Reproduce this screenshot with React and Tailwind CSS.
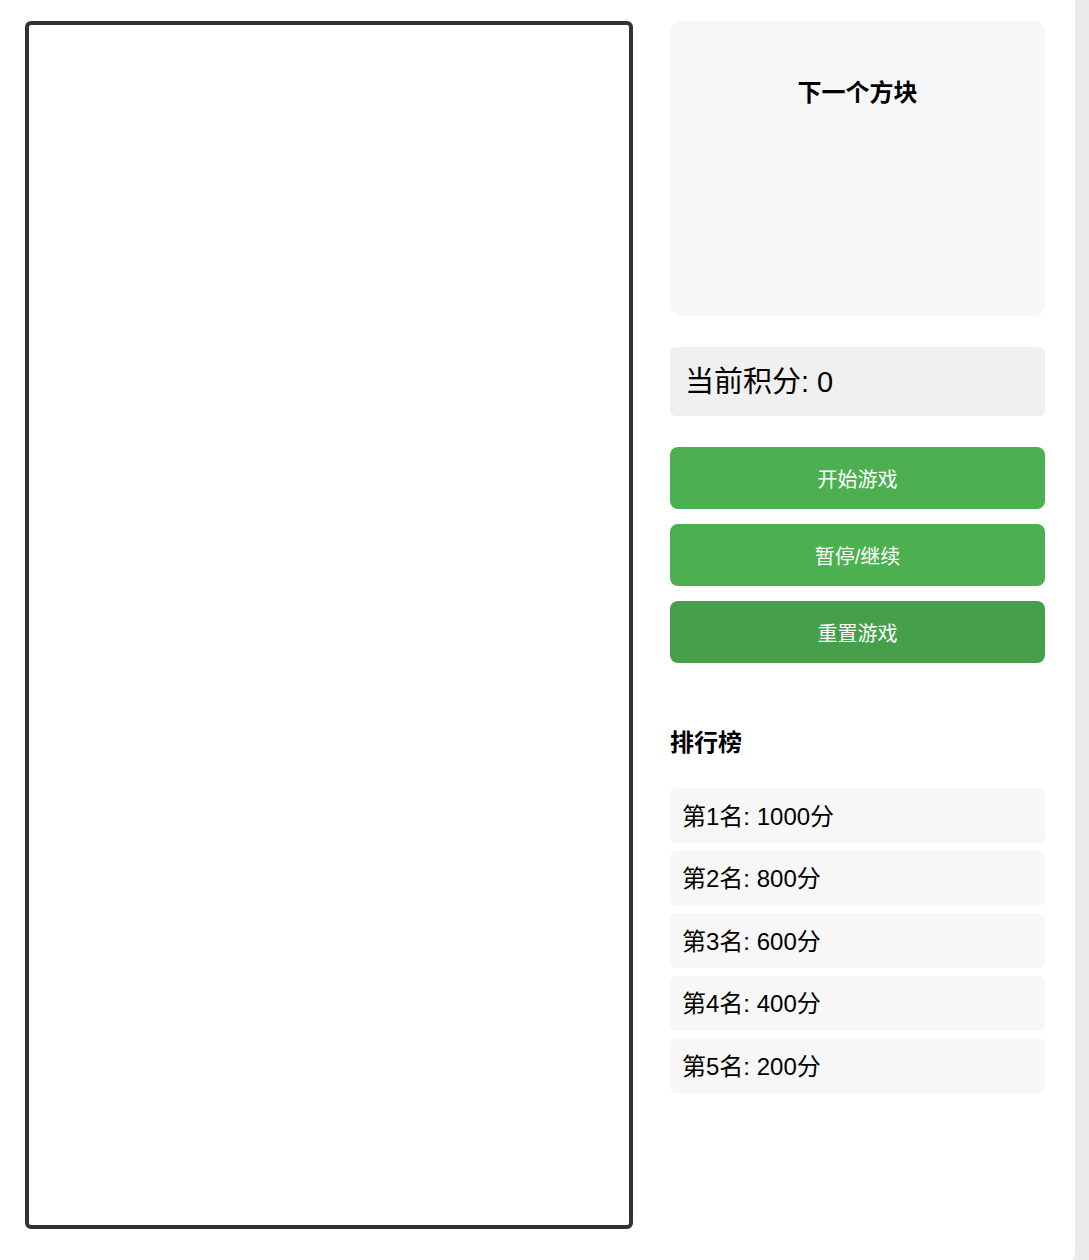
import React from 'react'

const FONT = { fontFamily: '"Liberation Sans", "Noto Sans CJK SC", sans-serif' }

const RANKS = [
  { place: 1, score: 1000 },
  { place: 2, score: 800 },
  { place: 3, score: 600 },
  { place: 4, score: 400 },
  { place: 5, score: 200 },
]

const btnCls = "w-full h-[62px] pt-[3px] rounded-[8px] text-white text-[20px] flex items-center justify-center"

export default function App() {
  return (
    <div className="min-h-screen bg-[#ebebeb] text-black" style={FONT}>
      <div className="w-[1075px] h-[1264px] bg-white rounded-br-[12px] flex pl-[25px] pt-[21px]">
        {/* game board */}
        <div className="w-[608px] h-[1208px] border-4 border-[#333333] rounded-[6px] bg-white flex-shrink-0" />

        {/* side panel */}
        <div className="w-[375px] ml-[37px] flex flex-col">
          <div className="h-[295px] bg-[#f7f7f7] rounded-[12px] flex flex-col items-center pt-[54px]">
            <h3 className="text-[24px] leading-[36px] font-bold">下一个方块</h3>
          </div>

          <div className="mt-[31px] h-[69px] pt-[3px] bg-[#f0f0f0] rounded-[6px] flex items-center px-[15px] text-[29px]">
            当前积分: 0
          </div>

          <div className="mt-[31px] flex flex-col gap-[15px]">
            <button className={`${btnCls} bg-[#4caf50]`}>开始游戏</button>
            <button className={`${btnCls} bg-[#4caf50]`}>暂停/继续</button>
            <button className={`${btnCls} bg-[#45a049]`}>重置游戏</button>
          </div>

          <h3 className="mt-[62px] text-[24px] leading-[36px] font-bold">排行榜</h3>

          <div className="mt-[27px] flex flex-col gap-[7.5px]">
            {RANKS.map(r => (
              <div key={r.place} className="h-[55px] pt-[2px] bg-[#f7f7f7] rounded-[6px] flex items-center px-[12px] text-[24px]">
                第{r.place}名: {r.score}分
              </div>
            ))}
          </div>
        </div>
      </div>
    </div>
  )
}
